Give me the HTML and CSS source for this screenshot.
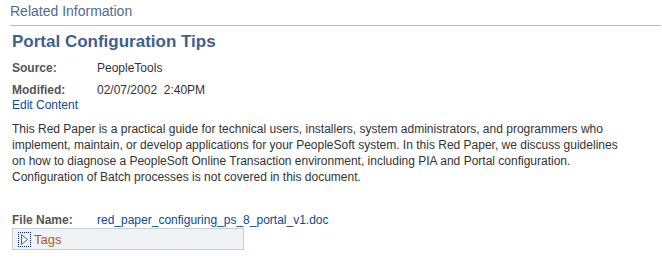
FILE: index.html
```html
<!DOCTYPE html>
<html lang="en">

<head>
  <meta charset="UTF-8">
  <title>Related Information</title>
  <link rel="stylesheet" href="styles.css">
</head>

<body>
  <div class="RelatedInfo">
    <h1 class="RelatedInfo-title">Related Information</h1>
    <h2 class="RelatedInfo-heading">Portal Configuration Tips</h2>

    <dl class="Meta">
      <div class="Meta-row">
        <dt>Source:</dt>
        <dd>PeopleTools</dd>
      </div>
      <div class="Meta-row Meta-row--modified">
        <dt>Modified:</dt>
        <dd>02/07/2002&nbsp; 2:40PM</dd>
      </div>
    </dl>
    <a class="Link" href="#">Edit Content</a>

    <p class="Description">This Red Paper is a practical guide for technical users, installers, system administrators, and programmers who<br>
      implement, maintain, or develop applications for your PeopleSoft system. In this Red Paper, we discuss guidelines<br>
      on how to diagnose a PeopleSoft Online Transaction environment, including PIA and Portal configuration.<br>
      Configuration of Batch processes is not covered in this document.</p>

    <dl class="Meta Meta--file">
      <div class="Meta-row">
        <dt>File Name:</dt>
        <dd><a class="Link" href="#">red_paper_configuring_ps_8_portal_v1.doc</a></dd>
      </div>
    </dl>

    <div class="Tags">
      <button class="Tags-toggle">
        <svg viewBox="0 0 9 13">
          <path d="M1.5 1.5 L7.5 6.5 L1.5 11.5 Z" />
        </svg>
      </button>
      <span class="Tags-label">Tags</span>
    </div>
  </div>
</body>

</html>
```

FILE: styles.css
```css
body {
  background: #fff;
  color: #333;
  font-family: "Liberation Sans", Arial, sans-serif;
  font-size: 12px;
  margin: 0;
}

* {
  box-sizing: border-box;
}

.RelatedInfo {
  padding: 3px 1px 0 10px;
}

.RelatedInfo-title {
  margin: 0;
  padding-bottom: 5px;
  border-bottom: 1px solid #bbb;
  font-size: 14px;
  font-weight: normal;
  line-height: 17px;
  color: #536a8f;
}

.RelatedInfo-heading {
  margin: 5px 0 0 2px;
  font-size: 17px;
  line-height: 21px;
  color: #3f5f8f;
}

.Meta {
  margin: 9px 0 0 2px;
}

.Meta-row {
  display: flex;
  line-height: 15px;
}

.Meta-row--modified {
  margin-top: 7px;
}

dt {
  width: 85px;
  font-weight: bold;
  color: #555;
}

dd {
  margin: 0;
}

.Link {
  color: #0e4a8a;
  text-decoration: none;
}

.RelatedInfo > .Link {
  display: block;
  margin-left: 2px;
  line-height: 14px;
}

.Description {
  margin: 9px 0 0 2px;
  line-height: 16px;
  white-space: nowrap;
}

.Meta--file {
  margin-top: 28px;
}

.Tags {
  display: flex;
  align-items: center;
  width: 232px;
  height: 22px;
  margin: 0 0 0 2px;
  padding-left: 5px;
  background: #f0f3f5;
  border: 1px solid #c8cdd0;
}

.Tags-toggle {
  appearance: none;
  padding: 0;
  background: transparent;
  border: 1px dotted #0a2a80;
  width: 13px;
  height: 15px;
  display: flex;
  justify-content: center;
  align-items: center;
}

.Tags-toggle svg {
  display: block;
  width: 9px;
  height: 13px;
  fill: #eef0f0;
  stroke: #666;
  stroke-width: 1;
}

.Tags-label {
  margin-left: 3px;
  font-size: 13px;
  color: #b05a1e;
}
```
